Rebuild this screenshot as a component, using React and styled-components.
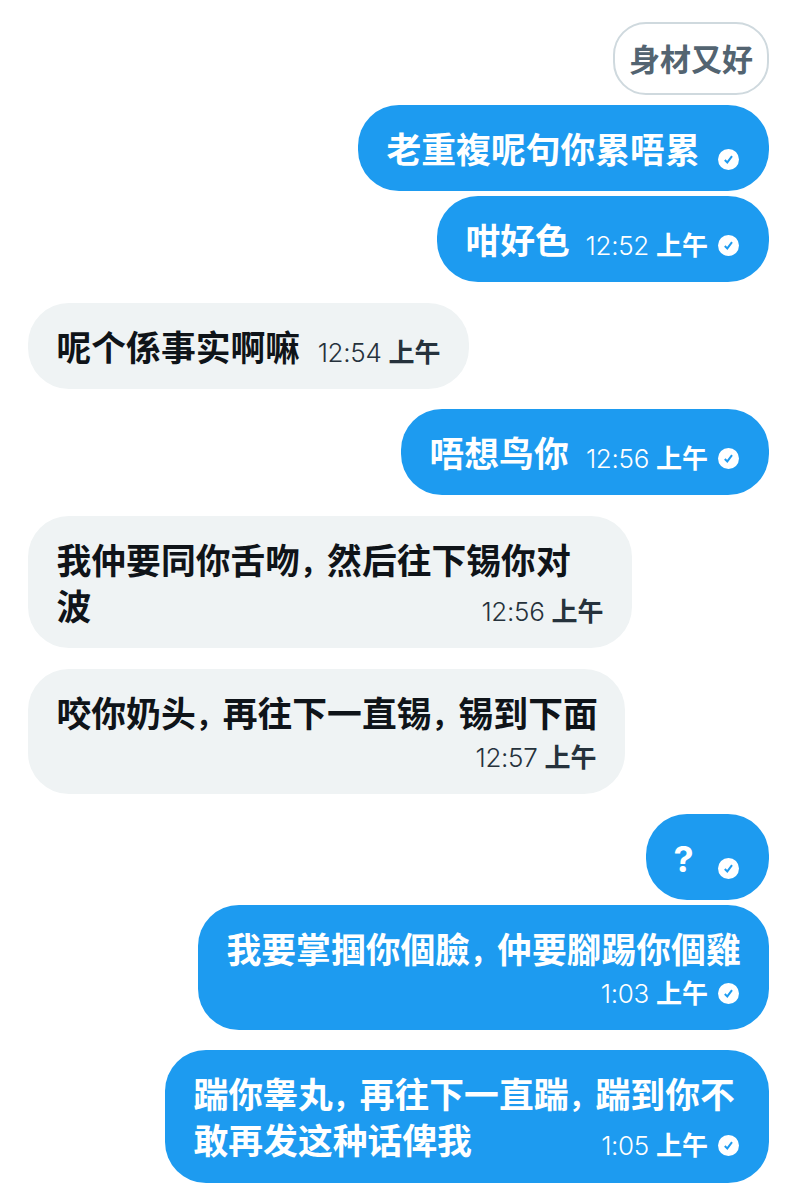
import styled, { createGlobalStyle } from 'styled-components';

const messages = [
  { side: 'out', width: 411, height: 86, lines: ['老重複呢句你累唔累'] },
  { side: 'out', width: 332, height: 86, gap: 5, lines: ['咁好色'], time: '12:52' },
  { side: 'in', width: 441, height: 86, gap: 21, lines: ['呢个係事实啊嘛'], time: '12:54' },
  { side: 'out', width: 368, height: 86, gap: 20, lines: ['唔想鸟你'], time: '12:56' },
  { side: 'in', width: 604, height: 132, gap: 21, lines: ['我仲要同你舌吻，然后往下锡你对', '波'], time: '12:56' },
  { side: 'in', width: 597, height: 125, gap: 21, lines: ['咬你奶头，再往下一直锡，锡到下面'], time: '12:57', below: true },
  { side: 'out', width: 123, height: 86, gap: 20, lines: ['?'] },
  { side: 'out', width: 571, height: 125, gap: 5, lines: ['我要掌掴你個臉，仲要腳踢你個雞'], time: '1:03', below: true },
  { side: 'out', width: 604, height: 133, gap: 20, lines: ['踹你睾丸，再往下一直踹，踹到你不', '敢再发这种话俾我'], time: '1:05' },
];

const Check = () => (
  <CheckIcon viewBox="0 0 21 21">
    <circle cx="10.5" cy="10.5" r="10.5" fill="#fff" />
    <path d="M6.8 11 L9.3 13.4 L14 7.2" fill="none" stroke="#1d9bf0" strokeWidth="2" />
  </CheckIcon>
);

const Line = ({ text }) => (
  <Text>
    {text.split(/([，?])/).map((part, i) => {
      if (part === '，') return <Comma key={i}>{part}</Comma>;
      if (part === '?') return <Question key={i}>{part}</Question>;
      return part;
    })}
  </Text>
);

const Message = ({ side, width, height, gap, lines, time, below }) => {
  const meta = (
    <Meta $below={below} $only={!time} $side={side}>
      {time && (
        <Time>
          <Clock>{time}</Clock>上午
        </Time>
      )}
      {side === 'out' && <Check />}
    </Meta>
  );

  return (
    <Bubble $side={side} $width={width} $height={height} $gap={gap}>
      {lines.map((line, i) => (
        <Row key={line}>
          <Line text={line} />
          {!below && i === lines.length - 1 && meta}
        </Row>
      ))}
      {below && <MetaRow>{meta}</MetaRow>}
    </Bubble>
  );
};

const App = () => (
  <>
    <GlobalStyle />
    <Chat>
      <Quote>身材又好</Quote>
      {messages.map((message) => (
        <Message key={message.lines[0]} {...message} />
      ))}
    </Chat>
  </>
);

const GlobalStyle = createGlobalStyle`
body {
    margin: 0;
    background: #fff;
    font-family: Inter, 'Noto Sans CJK SC', sans-serif;
}
* {
    box-sizing: border-box;
}
`;

const Chat = styled.div`
width: 801px;
height: 1199px;
overflow: hidden;
padding: 22px 32px 0 28px;
display: flex;
flex-direction: column;
`;

const Quote = styled.div`
align-self: flex-end;
flex: none;
width: 156px;
height: 73px;
margin-bottom: 10px;
padding-left: 14px;
border: 2px solid #cfd9de;
border-radius: 33px;
color: #536471;
font-family: 'Noto Sans CJK SC', sans-serif;
font-size: 31px;
font-weight: 700;
line-height: 68px;
white-space: nowrap;
`;

const Bubble = styled.div`
align-self: ${(p) => (p.$side === 'out' ? 'flex-end' : 'flex-start')};
flex: none;
width: ${(p) => p.$width}px;
height: ${(p) => p.$height}px;
margin-top: ${(p) => p.$gap || 0}px;
padding: 20px ${(p) => (p.$side === 'out' ? 30 : 28.5)}px 0 28.5px;
border-radius: 41px;
background: ${(p) => (p.$side === 'out' ? '#1d9bf0' : '#eff3f4')};
color: ${(p) => (p.$side === 'out' ? '#fff' : '#0f1419')};
`;

const Row = styled.div`
display: flex;
justify-content: space-between;
align-items: center;
height: 46px;
`;

const MetaRow = styled.div`
display: flex;
justify-content: flex-end;
height: 39px;
`;

const Text = styled.div`
font-family: 'Noto Sans CJK SC', sans-serif;
font-size: 34.8px;
font-weight: 700;
line-height: 46px;
white-space: nowrap;
`;

const Comma = styled.span`
font-size: 29px;
line-height: 1;
letter-spacing: -2px;
`;

const Question = styled.span`
font-family: Inter, sans-serif;
font-size: 36px;
line-height: 1;
margin-left: -1px;
`;

const Meta = styled.div`
display: flex;
align-items: center;
gap: 10px;
height: 26px;
position: relative;
top: ${(p) => (p.$below ? 9 : p.$only ? 11.5 : 6)}px;
color: ${(p) => (p.$side === 'out' ? '#fff' : '#26323c')};
`;

const Time = styled.div`
font-family: 'Noto Sans CJK SC', sans-serif;
font-size: 26px;
font-weight: 700;
line-height: 26px;
white-space: nowrap;
`;

const Clock = styled.span`
margin-right: 7px;
font-family: Inter, sans-serif;
font-weight: 300;
letter-spacing: -0.3px;
`;

const CheckIcon = styled.svg`
display: block;
width: 21px;
height: 21px;
`;

export default App;
